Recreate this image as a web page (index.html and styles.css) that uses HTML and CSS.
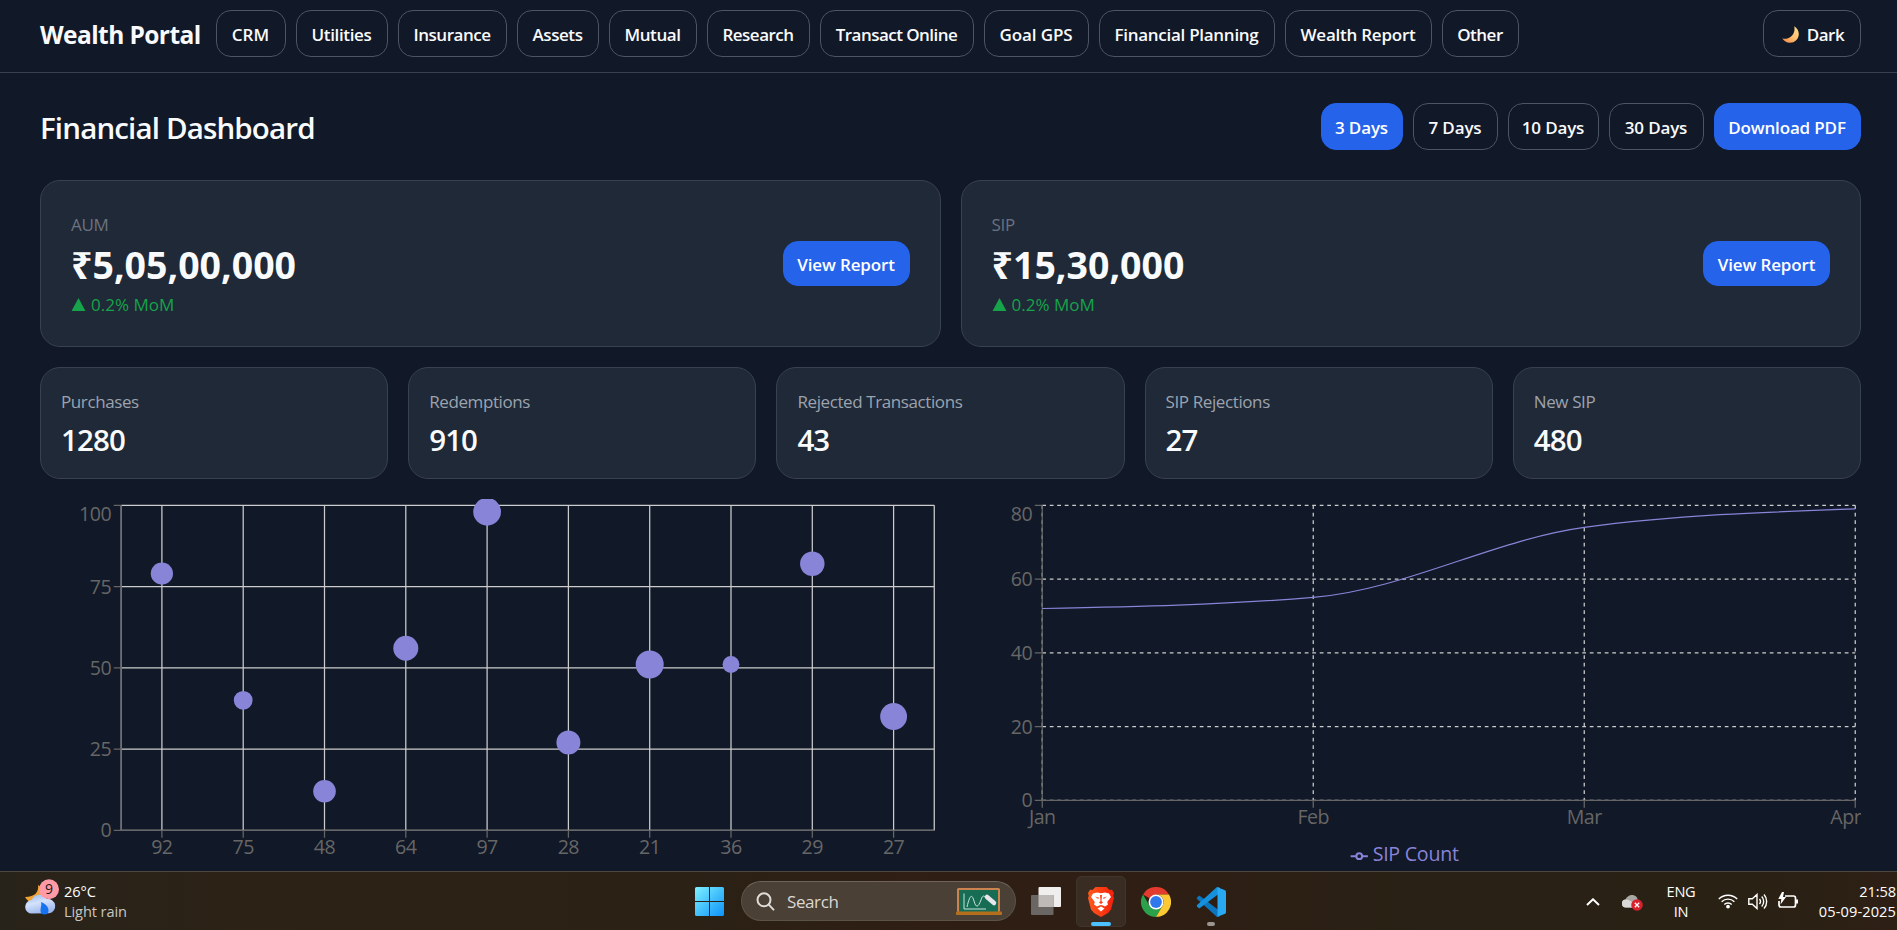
FILE: index.html
```html
<!DOCTYPE html>
<html lang="en">
<head>
<meta charset="utf-8">
<title>Wealth Portal</title>
<link rel="stylesheet" href="styles.css">
</head>
<body>
<div class="screen">
<div class="app">
<header class="topbar">
  <div class="brand">Wealth Portal</div>
  <nav class="nav">
    <a class="btn n-crm">CRM</a><a class="btn n-util">Utilities</a><a class="btn n-ins">Insurance</a><a class="btn n-assets">Assets</a><a class="btn n-mutual">Mutual</a><a class="btn n-research">Research</a><a class="btn n-transact">Transact Online</a><a class="btn n-goal">Goal GPS</a><a class="btn n-plan">Financial Planning</a><a class="btn n-report">Wealth Report</a><a class="btn n-other">Other</a>
  </nav>
  <a class="btn theme">
    <svg class="moon" viewBox="0 0 17 17"><defs><linearGradient id="mg" x1="1" y1="0" x2="0.2" y2="1"><stop offset="0" stop-color="#ffe08a"/><stop offset=".55" stop-color="#fdc170"/><stop offset="1" stop-color="#f78f4c"/></linearGradient></defs><path d="M12.2.2C15 1.8 16.8 4.800 16.8 8c0 5-4 8.800-8.800 8.800-3.400 0-6.300-1.900-7.800-4.600 1.500.6 3.400.8 5.200.2C10.400 11.200 13.600 6 12.200.2z" fill="url(#mg)"/></svg>
    <span>Dark</span>
  </a>
</header>
<main class="main">
  <div class="heading">
    <h1>Financial Dashboard</h1>
    <div class="ranges">
      <a class="btn primary r3">3 Days</a><a class="btn r7">7 Days</a><a class="btn r10">10 Days</a><a class="btn r30">30 Days</a><a class="btn primary pdf">Download PDF</a>
    </div>
  </div>
  <section class="totals">
    <div class="card total">
      <div class="figures"><div class="label">AUM</div><div class="amount">₹5,05,00,000</div><div class="trend"><svg viewBox="0 0 15 14"><path d="M7.500 0L15 14H0z"/></svg>0.2% MoM</div></div>
      <a class="btn primary view">View Report</a>
    </div>
    <div class="card total">
      <div class="figures"><div class="label">SIP</div><div class="amount">₹15,30,000</div><div class="trend"><svg viewBox="0 0 15 14"><path d="M7.500 0L15 14H0z"/></svg>0.2% MoM</div></div>
      <a class="btn primary view">View Report</a>
    </div>
  </section>
  <section class="stats">
    <div class="card stat"><div class="name">Purchases</div><div class="value">1280</div></div>
    <div class="card stat"><div class="name">Redemptions</div><div class="value">910</div></div>
    <div class="card stat"><div class="name">Rejected Transactions</div><div class="value">43</div></div>
    <div class="card stat"><div class="name">SIP Rejections</div><div class="value">27</div></div>
    <div class="card stat"><div class="name">New SIP</div><div class="value">480</div></div>
  </section>
  <section class="charts">
    <svg class="chart" viewBox="0 0 720.4 300">
      <path class="grid" d="M65 5H715.400M65 70H715.400M65 135H715.400M65 200H715.400M65 265H715.400M65 5V265M97.520 5V265M162.560 5V265M227.600 5V265M292.640 5V265M357.680 5V265M422.720 5V265M487.760 5V265M552.800 5V265M617.840 5V265M682.880 5V265M715.400 5V265"/>
      <path class="axis" d="M65 265H715.400M65 5V265M59 5H65M59 70H65M59 135H65M59 200H65M59 265H65M97.520 265v6M162.560 265v6M227.600 265v6M292.640 265v6M357.680 265v6M422.720 265v6M487.760 265v6M552.800 265v6M617.840 265v6M682.880 265v6"/>
      <g class="tick end"><text x="57" y="17.600">100</text><text x="57" y="75.700">75</text><text x="57" y="140.700">50</text><text x="57" y="205.700">25</text><text x="57" y="270.400">0</text></g>
      <g class="tick mid"><text x="97.500" y="284">92</text><text x="162.600" y="284">75</text><text x="227.600" y="284">48</text><text x="292.600" y="284">64</text><text x="357.700" y="284">97</text><text x="422.700" y="284">28</text><text x="487.800" y="284">21</text><text x="552.800" y="284">36</text><text x="617.800" y="284">29</text><text x="682.900" y="284">27</text></g>
      <g class="dots"><circle cx="97.520" cy="59.600" r="8.900"/><circle cx="162.560" cy="161" r="7.500"/><circle cx="227.600" cy="233.800" r="9.050"/><circle cx="292.640" cy="119.400" r="10"/><circle cx="357.680" cy="10.200" r="11.100"/><circle cx="422.720" cy="194.800" r="9.600"/><circle cx="487.760" cy="132.400" r="11.200"/><circle cx="552.800" cy="132.400" r="6.750"/><circle cx="617.840" cy="51.800" r="9.800"/><circle cx="682.880" cy="174" r="10.750"/></g>
    </svg>
    <svg class="chart" viewBox="0 0 720.4 300">
      <path class="grid dashed" d="M65 5H715.400M65 64H715.400M65 123H715.400M65 182H715.400M65 241H715.400M65 5V241M281.800 5V241M498.600 5V241M715.400 5V241"/>
      <path class="axis" d="M65 241H715.400M65 5V241M59 5H65M59 64H65M59 123H65M59 182H65M59 241H65M65 241v6M281.800 241v6M498.600 241v6M715.400 241v6"/>
      <path class="curve" d="M65 87.600C137.267 86.125 209.533 84.650 281.800 78.750C354.067 72.850 426.333 32.533 498.600 22.700C570.867 12.867 643.133 10.408 715.400 7.950"/>
      <g class="tick end"><text x="57" y="17.600">80</text><text x="57" y="69.700">60</text><text x="57" y="128.700">40</text><text x="57" y="187.700">20</text><text x="57" y="246.400">0</text></g>
      <g class="tick mid"><text x="65" y="260">Jan</text><text x="281.800" y="260">Feb</text><text x="498.600" y="260">Mar</text><text x="707.800" y="260">Apr</text></g>
      <path class="key" d="M311.700 285.700h4.600M320.900 285.700h4.600"/><circle class="key" cx="318.600" cy="285.700" r="2.300"/>
      <text class="legend" x="329.300" y="289.500">SIP Count</text>
    </svg>
  </section>
</main>
</div>
<footer class="taskbar">
  <div class="weather">
    <svg viewBox="0 0 36 38"><defs><linearGradient id="cl" x1="0" y1="0" x2=".4" y2="1"><stop offset="0" stop-color="#8fb5f0"/><stop offset=".5" stop-color="#d4e2fb"/><stop offset="1" stop-color="#9fb9ee"/></linearGradient></defs><path d="M13 6c1 7-3 12-13 12 3 6 11 8 16 4s5-12-3-16z" fill="#f0a232"/><path d="M7 34.500a6.700 6.700 0 01-.3-13.400A8.500 8.500 0 0122 20a7.200 7.200 0 012 14.300z" fill="url(#cl)"/><path d="M16 23c5 2 7.500 5 7.500 8.500a4 4 0 01-8 0C15.500 28 17 26 16 23z" fill="#1672ee"/><circle cx="24" cy="10.200" r="10" fill="#ff9aa6"/><text class="badge" x="24" y="15.200">9</text></svg>
    <div class="two-lines"><div>26°C</div><div class="dim">Light rain</div></div>
  </div>
  <div class="dock">
    <svg class="start" viewBox="0 0 29 29"><defs><linearGradient id="wg" x1="0" y1="0" x2="1" y2="1"><stop offset="0" stop-color="#7df0ff"/><stop offset="1" stop-color="#0c93f8"/></linearGradient></defs><path d="M0 1.500A1.500 1.500 0 011.500 0H14v14H0zM15 0h12.500A1.500 1.500 0 0129 1.500V14H15zM0 15h14v14H1.500A1.500 1.500 0 010 27.500zM15 15h14v12.500a1.500 1.500 0 01-1.500 1.500H15z" fill="url(#wg)"/></svg>
    <div class="search">
      <svg class="lens" viewBox="0 0 19 19"><circle cx="8" cy="7.800" r="6.500"/><path d="M12.800 12.600L17.500 17.600"/></svg>
      <span>Search</span>
      <svg class="board" viewBox="0 0 46 27"><rect x="1" width="43" height="24" rx="1.500" fill="#cb8450"/><rect x="3" y="2" width="39" height="22" fill="#176c54"/><path d="M8 5.500V21H30M11 19C14 6 16 6 18 13s4 7 7-1c1-4 3-5 4-3" fill="none" stroke="#c9e4da" stroke-width="1"/><path d="M31 9l7 6" stroke="#e9e6ee" stroke-width="4.500" stroke-linecap="round"/><rect y="23.500" width="46" height="3.500" rx=".8" fill="#b56f1c"/></svg>
    </div>
    <svg class="views" viewBox="0 0 30 28"><rect x="7.500" width="22.500" height="20" rx="1" fill="#f0efee"/><path d="M1 8h21.500v19a1 1 0 01-1 1H1a1 1 0 01-1-1V9a1 1 0 011-1z" fill="#6a6663"/><path d="M7.500 8H22.500v12H7.500z" fill="#bdbab7"/></svg>
    <div class="tile active">
      <svg viewBox="0 0 26 30"><defs><linearGradient id="bg" x1="0" x2="1"><stop offset="0" stop-color="#ff5a1c"/><stop offset="1" stop-color="#f51f0c"/></linearGradient></defs><path d="M7.500 0h11l3 3 2.500-.3L26 6l-.8 3 .8 2-3 11.500-3 3.500-7 4-7-4-3-3.500L0 11l.8-2L0 6l2-3.300L4.500 3z" fill="url(#bg)"/><path d="M5 6.500l4-1 4 .8 4-.8 4 1 2 3.500-3.800 5 .8 2.600-3 2-2.200-1L13 18l-1.800.600-2.200 1-3-2 .8-2.600L3 10zM9.500 21.500L13 19.500l3.500 2L13 24.500z" fill="#fff"/><path d="M7 9.500l4 1.200-.8 1.300zM19 9.500l-4 1.200.8 1.300zM12 8h2l-.5 6 1.500 1.500-2 1.500-2-1.500 1.500-1.500z" fill="#fb4218"/></svg>
      <i class="run"></i>
    </div>
    <div class="tile">
      <svg viewBox="0 0 30 30"><path d="M15 15L2 7.500A15 15 0 0128 7.500H15z" fill="#e33b2e"/><path d="M2 7.500A15 15 0 0015 30l6.500-11.200L15 15 8.500 18.800z" fill="#2ca14b"/><path d="M28 7.500A15 15 0 0115 30l6.500-11.200A7.500 7.500 0 0015 7.500z" fill="#fcc934"/><circle cx="15" cy="15" r="7.500" fill="#fff"/><circle cx="15" cy="15" r="5.900" fill="#3079ec"/></svg>
    </div>
    <div class="tile">
      <svg viewBox="0 0 30 30"><path d="M1 10.500L3.300 8.600 23.500 23.800V29.500L21 30 .8 11.800z" fill="#0b75bd"/><path d="M1 19.500l2.300 1.900L23.500 6.200V.5L21 0 .8 18.200z" fill="#1590dc"/><path d="M21.500.2L28.500 3a2 2 0 011.500 2v20a2 2 0 01-1.500 2l-7 2.800z" fill="#29a9f3"/></svg>
      <i class="run idle"></i>
    </div>
  </div>
  <div class="tray">
    <svg class="chev" viewBox="0 0 14 8"><path d="M1 7l6-5.700L13 7"/></svg>
    <svg class="cloud" viewBox="0 0 21 17"><path d="M4 13.500a4 4 0 01-.5-8C5 2 8 .5 11 1s4.500 2.500 4.500 4.500c2.500.5 3.500 3 2.500 5.500l-3 2.500z" fill="#a9a7a4"/><path d="M4 13.500a4 4 0 010-8c3 0 6 2 9 5v3z" fill="#dcdad8"/><circle cx="15" cy="11" r="5.800" fill="#d9202c"/><path d="M12.800 8.800l4.400 4.400M17.200 8.800l-4.400 4.400" stroke="#fff" stroke-width="1.300"/></svg>
    <div class="two-lines lang"><div>ENG</div><div>IN</div></div>
    <svg class="wifi" viewBox="0 0 20 16"><path d="M.8 6a13 13 0 0118.400 0M3.600 8.800a9 9 0 0112.800 0M6.300 11.500a5.200 5.200 0 017.400 0"/><circle cx="10" cy="13.600" r="1.900"/></svg>
    <svg class="vol" viewBox="0 0 20 17"><path d="M.8 5.800h3.500L9 1.500v14L4.300 11.200H.8zM11.500 6a4 4 0 010 5M13.700 3.600a7 7 0 010 9.800M16 1.500a10.500 10.500 0 010 14"/></svg>
    <svg class="batt" viewBox="0 0 20 17"><path d="M7 4h8.500a2 2 0 012 2v7a2 2 0 01-2 2H3a2 2 0 01-2-2V9M19.200 7.500v4"/><path class="bolt" d="M4 0L.3 7h3L2.500 12.500 8 5H5L6 0z"/></svg>
    <div class="two-lines clock"><div>21:58</div><div class="date">05-09-2025</div></div>
  </div>
</footer>
</div>
</body>
</html>
```
FILE: styles.css
```css
* { box-sizing: border-box; }
body {
  margin: 0;
  background: #111827;
  color: #f9fafb;
  font-family: "Open Sans", "Noto Sans", sans-serif;
}
.screen { display: flex; flex-direction: column; height: 930px; overflow: hidden; }
.app { height: 871px; overflow: hidden; }

/* Top navigation */
.topbar {
  display: flex;
  align-items: flex-start;
  height: 73px;
  padding: 10px 36px 0 40px;
  border-bottom: 1px solid #374151;
}
.brand {
  width: 176px;
  font-size: 24.5px;
  line-height: 49px;
  font-weight: 700;
  letter-spacing: -.58px;
  white-space: nowrap;
}
.nav, .ranges { display: flex; gap: 10px; }
.btn {
  display: flex;
  align-items: center;
  justify-content: center;
  height: 47px;
  padding: 1px 1px 0 0;
  border: 1px solid #4b5563;
  border-radius: 15px;
  font-size: 17px;
  line-height: 25px;
  font-weight: 600;
  white-space: nowrap;
}
.n-crm { width: 70px; letter-spacing: .1px; }
.n-util { width: 92px; letter-spacing: -.35px; }
.n-ins { width: 109px; letter-spacing: -.48px; }
.n-assets { width: 82px; letter-spacing: -.42px; }
.n-mutual { width: 88px; letter-spacing: -.43px; }
.n-research { width: 103px; letter-spacing: -.52px; }
.n-transact { width: 154px; letter-spacing: -.54px; }
.n-goal { width: 105px; letter-spacing: -.1px; }
.n-plan { width: 176px; letter-spacing: -.28px; }
.n-report { width: 147px; letter-spacing: -.24px; }
.n-other { width: 77px; letter-spacing: -.5px; }
.theme { width: 98px; margin-left: auto; gap: 8px; letter-spacing: -.5px; padding-left: 3px; }
.moon { width: 17px; height: 17px; margin-top: 1px; }

/* Page body */
.main { padding: 30px 36px 0 40px; }
.heading { display: flex; justify-content: space-between; height: 47px; }
h1 {
  margin: 0;
  font-size: 29.5px;
  line-height: 49px;
  font-weight: 600;
  letter-spacing: -.85px;
}
.primary { background: #2563eb; border-color: #2563eb; color: #fff; }
.ranges { letter-spacing: -.15px; }
.r3 { width: 82px; }
.r7 { width: 85px; }
.r10 { width: 91px; }
.r30 { width: 95px; }
.pdf { width: 147px; }

.card { background: #1f2937; border: 1px solid #374151; border-radius: 20px; }
.totals { display: grid; grid-template-columns: 1fr 1fr; gap: 20px; margin-top: 30px; }
.total {
  display: flex;
  align-items: center;
  justify-content: space-between;
  height: 167px;
  padding: 0 30px;
}
.figures { padding-top: 2px; }
.label { font-size: 17px; line-height: 25px; color: #6b7280; letter-spacing: -.3px; }
.amount { margin: 5px 0 0; font-size: 37.5px; line-height: 45px; font-weight: 700; }
.trend {
  display: flex;
  align-items: center;
  gap: 5px;
  margin-top: 5px;
  font-size: 17px;
  line-height: 25px;
  color: #16a34a;
}
.trend svg { width: 15px; height: 13px; fill: #16a34a; }
.view { width: 127px; height: 45px; padding-right: 0; letter-spacing: -.15px; }

.stats { display: grid; grid-template-columns: repeat(5, 1fr); gap: 20px; margin-top: 20px; }
.stat { height: 112px; padding: 21px 20px; }
.name { font-size: 17px; line-height: 25px; color: #9ca3af; letter-spacing: -.4px; }
.value { margin-top: 8px; font-size: 29.5px; line-height: 36px; font-weight: 600; letter-spacing: -.9px; }

/* Charts */
.charts { display: grid; grid-template-columns: 1fr 1fr; gap: 20px; margin-top: 20px; }
.chart { display: block; width: 100%; height: 375px; overflow: hidden; }
.grid { fill: none; stroke: #ccc; }
.dashed { stroke-dasharray: 3 3; }
.axis { fill: none; stroke: #666; }
.curve { fill: none; stroke: #8884d8; }
.dots { fill: #8884d8; }
.tick { font-size: 15.7px; fill: #666; letter-spacing: -.4px; }
.end { text-anchor: end; }
.mid { text-anchor: middle; }
.key { fill: none; stroke: #8884d8; stroke-width: 1.6; }
.legend { font-size: 15.7px; fill: #8884d8; letter-spacing: -.2px; }

/* Taskbar */
.taskbar {
  display: grid;
  grid-template-columns: 695px 891px 311px;
  height: 59px;
  border-top: 1px solid #4c4740;
  background: linear-gradient(90deg, #28231a 0, #2c2216 12%, #2b2115 36%, #2f1e14 50%, #2e1e14 62%, #292115 75%, #292114 92%, #2e1f15 100%);
  color: #fff;
}
.weather { display: flex; padding-left: 25px; gap: 3px; }
.weather svg { width: 36px; height: 38px; margin-top: 7px; }
.badge { font-size: 14px; fill: #1b1b1b; text-anchor: middle; }
.two-lines { padding-top: 9px; font-size: 14.6px; line-height: 20px; letter-spacing: -.1px; white-space: nowrap; }
.dim { color: #c9c6c2; }
.dock { display: flex; }
.start { width: 29px; height: 29px; margin-top: 15px; }
.search {
  display: flex;
  width: 275px;
  height: 40px;
  margin: 9px 0 0 17px;
  padding: 0 13px 0 14px;
  align-items: center;
  border: 1px solid #5b5248;
  border-top-color: #6d645b;
  border-radius: 20px;
  background: #4a4035;
  color: #dbd8d5;
  font-size: 17px;
  letter-spacing: -.4px;
}
.search span { margin-left: 12px; }
.lens { width: 19px; height: 19px; fill: none; stroke: #dedbd8; stroke-width: 2; stroke-linecap: round; }
.board { width: 46px; height: 27px; margin-left: auto; }
.views { width: 30px; height: 28px; margin: 15px 15px 0; }
.tile {
  display: flex;
  flex-direction: column;
  align-items: center;
  width: 50px;
  height: 51px;
  margin: 4px 5px 0 0;
  padding-top: 10px;
  border: 1px solid transparent;
  border-radius: 5px;
}
.tile svg { width: 30px; height: 30px; }
.active { background: #392d23; border-color: #40352b; }
.run { width: 20px; height: 4px; margin-top: 5px; border-radius: 2px; background: #4cc2ff; }
.idle { width: 8px; background: #9b9691; }
.tray { display: flex; align-items: flex-start; }
.tray svg { fill: none; stroke: #fff; stroke-width: 1.4; }
.tray .chev { width: 14px; height: 8px; margin-top: 26px; stroke-width: 2; }
.tray .cloud { width: 21px; height: 17px; margin: 22px 0 0 22px; stroke: none; }
.lang { width: 30px; margin-left: 23px; text-align: center; letter-spacing: -.3px; }
.tray .wifi { width: 20px; height: 16px; margin: 21px 0 0 22px; }
.wifi circle { fill: #fff; stroke: none; }
.tray .vol { width: 20px; height: 17px; margin: 21px 0 0 10px; }
.tray .batt { width: 20px; height: 17px; margin: 20px 0 0 10px; stroke-width: 1.7; }
.batt .bolt { fill: #fff; stroke: none; }
.clock { margin-left: auto; padding-right: 1px; text-align: right; }
.date { letter-spacing: .1px; }
```
